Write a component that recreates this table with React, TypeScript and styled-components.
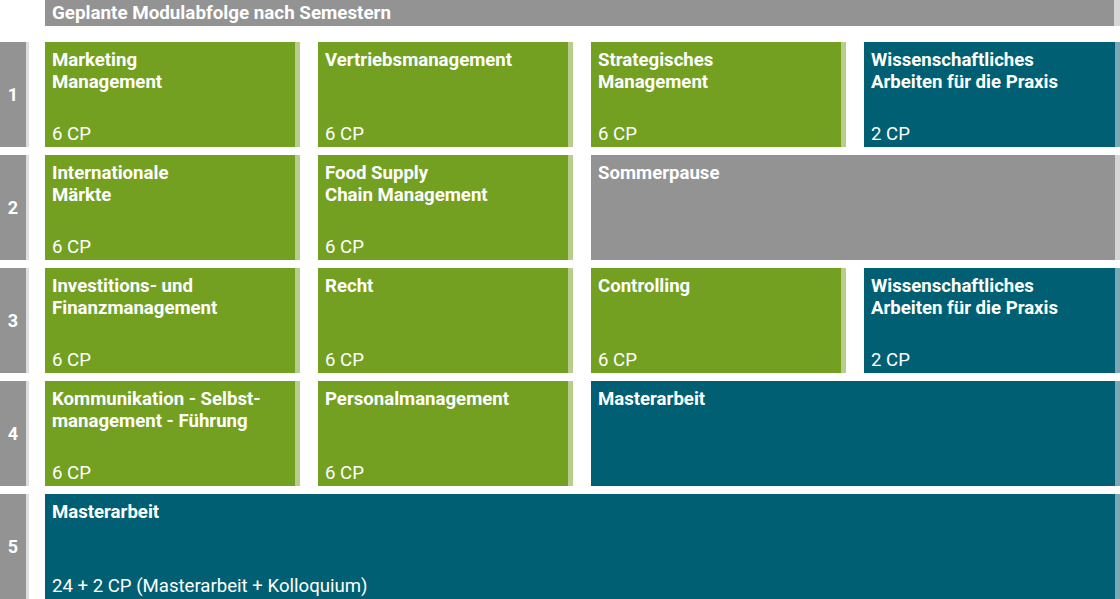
import React from "react";
import styled, { createGlobalStyle } from "styled-components";

const Global = createGlobalStyle`
  html, body { margin: 0; padding: 0; background: #ffffff; }
  body { font-family: Roboto, "Liberation Sans", Arial, sans-serif; overflow: hidden; }
  * { box-sizing: border-box; }
`;

type Tone = "green" | "teal" | "gray";

const palette: Record<Tone, { bg: string; edge: string }> = {
  green: { bg: "#74a022", edge: "#b6cd8c" },
  teal: { bg: "#005f72", edge: "#7aa8b3" },
  gray: { bg: "#939393", edge: "#d6d6d6" },
};

const Page = styled.div`
  width: 1120px;
  height: 599px;
  display: grid;
  grid-template-columns: 29px 1fr;
  column-gap: 16px;
  row-gap: 8px;
  grid-template-rows: 34px repeat(5, 105px);
`;

const Header = styled.div`
  grid-column: 2;
  height: 26px;
  background: ${palette.gray.bg};
  border-right: 6px solid ${palette.gray.edge};
  color: #fff;
  font-weight: 700;
  font-size: 18.8px;
  line-height: 26px;
  padding-left: 7px;
  white-space: nowrap;
`;

const Label = styled.div`
  grid-column: 1;
  background: ${palette.gray.bg};
  border-right: 3px solid #dedede;
  color: #fff;
  font-weight: 700;
  font-size: 18px;
  display: flex;
  align-items: center;
  justify-content: center;
`;

const Modules = styled.div`
  grid-column: 2;
  display: grid;
  grid-template-columns: repeat(3, 255px) 1fr;
  column-gap: 18px;
`;

const Card = styled.div<{ $tone: Tone; $span?: number }>`
  grid-column: span ${(p) => p.$span ?? 1};
  background: ${(p) => palette[p.$tone].bg};
  border-right: 5px solid ${(p) => palette[p.$tone].edge};
  color: #fff;
  padding: 7px 7px 2px;
  display: flex;
  flex-direction: column;
  justify-content: space-between;
  font-size: 18.6px;
  line-height: 22px;
`;

const Title = styled.div`
  font-weight: 700;
  white-space: pre-line;
`;

const Credits = styled.div`
  font-weight: 400;
`;

type Mod = { title: string; cp?: string; tone: Tone; span?: number };

const rows: Mod[][] = [
  [
    { title: "Marketing\nManagement", cp: "6 CP", tone: "green" },
    { title: "Vertriebsmanagement", cp: "6 CP", tone: "green" },
    { title: "Strategisches\nManagement", cp: "6 CP", tone: "green" },
    { title: "Wissenschaftliches\nArbeiten für die Praxis", cp: "2 CP", tone: "teal" },
  ],
  [
    { title: "Internationale\nMärkte", cp: "6 CP", tone: "green" },
    { title: "Food Supply\nChain Management", cp: "6 CP", tone: "green" },
    { title: "Sommerpause", tone: "gray", span: 2 },
  ],
  [
    { title: "Investitions- und\nFinanzmanagement", cp: "6 CP", tone: "green" },
    { title: "Recht", cp: "6 CP", tone: "green" },
    { title: "Controlling", cp: "6 CP", tone: "green" },
    { title: "Wissenschaftliches\nArbeiten für die Praxis", cp: "2 CP", tone: "teal" },
  ],
  [
    { title: "Kommunikation - Selbst-\nmanagement - Führung", cp: "6 CP", tone: "green" },
    { title: "Personalmanagement", cp: "6 CP", tone: "green" },
    { title: "Masterarbeit", tone: "teal", span: 2 },
  ],
  [
    { title: "Masterarbeit", cp: "24 + 2 CP (Masterarbeit + Kolloquium)", tone: "teal", span: 4 },
  ],
];

export default function App() {
  return (
    <>
      <Global />
      <Page>
        <Header>Geplante Modulabfolge nach Semestern</Header>
        {rows.map((mods, i) => (
          <React.Fragment key={i}>
            <Label>{i + 1}</Label>
            <Modules>
              {mods.map((m, j) => (
                <Card key={j} $tone={m.tone} $span={m.span}>
                  <Title>{m.title}</Title>
                  {m.cp ? <Credits>{m.cp}</Credits> : <span />}
                </Card>
              ))}
            </Modules>
          </React.Fragment>
        ))}
      </Page>
    </>
  );
}
